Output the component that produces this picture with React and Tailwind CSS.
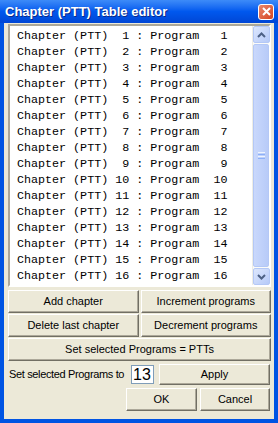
import React from "react";

const rows = Array.from({ length: 16 }, (_, i) => i + 1);

function pad(n, w) {
  return String(n).padStart(w, " ");
}

function Btn({ children, className = "" }) {
  return (
    <button
      className={
        "flex items-center justify-center bg-[#ECE9D8] text-black text-[11px] leading-none whitespace-nowrap " +
        "border border-t-white border-l-white border-b-[#716F64] border-r-[#716F64] " +
        "shadow-[inset_-1px_-1px_0_#ACA899] " +
        className
      }
    >
      {children}
    </button>
  );
}

function ScrollBtn({ up }) {
  return (
    <div className="h-[17px] w-[17px] rounded-[2px] border border-[#B4C8F6] bg-gradient-to-br from-[#DDE7FD] to-[#B6CAF8] flex items-center justify-center">
      <svg width="9" height="6" viewBox="0 0 9 6">
        <path
          d={up ? "M1 5 L4.5 1.5 L8 5" : "M1 1 L4.5 4.5 L8 1"}
          fill="none"
          stroke="#4D6185"
          strokeWidth="2"
        />
      </svg>
    </div>
  );
}

export default function App() {
  return (
    <div
      className="w-[278px] h-[423px] flex flex-col bg-[#0054E3] overflow-hidden"
      style={{ fontFamily: '"Liberation Sans", Arial, sans-serif' }}
    >
      {/* Title bar */}
      <div className="h-[23px] shrink-0 flex items-center justify-between pl-[5px] pr-[4px] bg-gradient-to-b from-[#3D8BF8] via-[#0058EE] to-[#0046D5]">
        <span className="text-white font-bold text-[13px] [text-shadow:1px_1px_0_#0A2A8A]">
          Chapter (PTT) Table editor
        </span>
        <div className="w-[16px] h-[16px] rounded-[3px] border border-white bg-gradient-to-br from-[#E8866A] to-[#D5421C] flex items-center justify-center">
          <svg width="9" height="9" viewBox="0 0 9 9">
            <path d="M1 1 L8 8 M8 1 L1 8" stroke="white" strokeWidth="2" />
          </svg>
        </div>
      </div>

      {/* Body */}
      <div className="flex-1 mx-[4px] mb-[4px] bg-[#ECE9D8] pl-[4px] pr-[3px] pt-[1px] flex flex-col">
        {/* List */}
        <div className="h-[263px] flex border-2 border-t-[#ACA899] border-l-[#ACA899] border-b-white border-r-white bg-white">
          <div
            className="flex-1 pt-[2px] pl-[7px] text-[11.7px] text-black"
            style={{ fontFamily: '"Liberation Mono", "Courier New", monospace' }}
          >
            {rows.map((n) => (
              <div key={n} className="h-[16px] leading-[16px] whitespace-pre">
                {`Chapter (PTT) ${pad(n, 2)} : Program  ${pad(n, 2)}`}
              </div>
            ))}
          </div>
          <div className="w-[17px] flex flex-col bg-[#FBFBF8] border-l border-[#EEEDE5]">
            <ScrollBtn up />
            <div className="flex-1 my-[1px] rounded-[2px] border border-[#B4C8F6] bg-gradient-to-r from-[#C9D8FC] to-[#B8CBF8] flex items-center justify-center">
              <div className="flex flex-col gap-[1px]">
                <div className="w-[7px] h-[1px] bg-[#EEF4FE]" />
                <div className="w-[7px] h-[1px] bg-[#8CB0F8]" />
                <div className="w-[7px] h-[1px] bg-[#EEF4FE]" />
                <div className="w-[7px] h-[1px] bg-[#8CB0F8]" />
              </div>
            </div>
            <ScrollBtn />
          </div>
        </div>

        {/* Buttons */}
        <div className="mt-[3px] grid grid-cols-2 gap-x-[2px] gap-y-[1px]">
          <Btn className="h-[23px]">Add chapter</Btn>
          <Btn className="h-[23px]">Increment programs</Btn>
          <Btn className="h-[23px]">Delete last chapter</Btn>
          <Btn className="h-[23px]">Decrement programs</Btn>
          <Btn className="h-[23px] col-span-2">Set selected Programs = PTTs</Btn>
        </div>

        <div className="mt-[3px] flex items-center h-[21px]">
          <span className="text-[11px] text-black pl-[1px] w-[123px] shrink-0 whitespace-nowrap tracking-[-0.35px]">
            Set selected Programs to
          </span>
          <div className="w-[23px] h-[19px] shrink-0 border border-[#7F9DB9] bg-white text-[16px] leading-[17px] pl-[1px] text-black">
            13
          </div>
          <Btn className="ml-[5px] flex-1 h-[21px] mr-[1px]">Apply</Btn>
        </div>

        <div className="mt-[3px] flex justify-end gap-[3px] pr-[1px]">
          <Btn className="w-[71px] h-[23px]">OK</Btn>
          <Btn className="w-[70px] h-[23px]">Cancel</Btn>
        </div>
      </div>
    </div>
  );
}
